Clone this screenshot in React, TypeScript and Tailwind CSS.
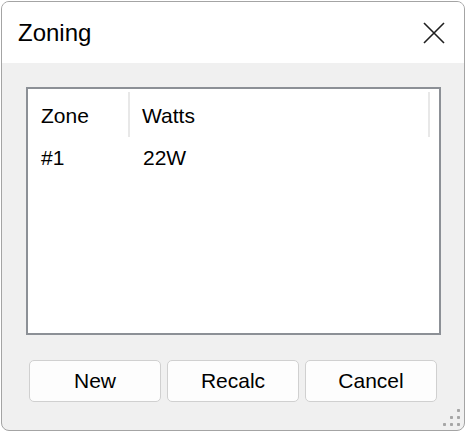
import React from "react";

export default function App() {
  const font = { fontFamily: '"Liberation Sans", Arial, sans-serif' };
  return (
    <div className="w-[467px] h-[432px] bg-white p-px" style={font}>
      <div className="w-[464px] h-[430px] rounded-[8px] border border-[#a4a4a4] overflow-hidden flex flex-col bg-[#f0f0f0] relative">
        <div className="h-[61px] bg-white flex items-center justify-between pl-[16px] pr-[19px] shrink-0">
          <span className="text-[24px] text-black leading-none mt-[1px]">Zoning</span>
          <svg width="22" height="22" viewBox="0 0 22 22" className="mt-[1px]">
            <path d="M1 1 L21 21 M21 1 L1 21" stroke="#1f1f1f" strokeWidth="1.6" fill="none" />
          </svg>
        </div>
        <div className="flex-1 flex flex-col pl-[24px] pr-[23px] pt-[24px]">
          <div className="h-[248px] border-2 border-[#8c9096] bg-white flex flex-col">
            <div className="flex h-[50px] text-[21px] text-black">
              <div className="w-[102px] pl-[13px] pt-[8px] border-r-2 border-[#e8e8e8] mt-[3px] mb-[2px]">
                Zone
              </div>
              <div className="w-[300px] pl-[12px] pt-[8px] border-r-2 border-[#e8e8e8] mt-[3px] mb-[2px]">
                Watts
              </div>
            </div>
            <div className="flex text-[21px] text-black mt-[3px]">
              <div className="w-[103px] pl-[13px]">#1</div>
              <div className="pl-[12px]">22W</div>
            </div>
          </div>
          <div className="flex gap-[6px] mt-[25px] pl-[3px]">
            {["New", "Recalc", "Cancel"].map((t) => (
              <div
                key={t}
                className="w-[132px] h-[42px] rounded-[5px] border border-[#d0d0d0] bg-[#fdfdfd] flex items-center justify-center text-[21px] text-black"
              >
                {t}
              </div>
            ))}
          </div>
        </div>
        <svg width="18" height="18" viewBox="0 0 18 18" className="absolute right-[3px] bottom-[4px]">
          {[
            [14, 2],
            [14, 9],
            [14, 16],
            [7, 9],
            [7, 16],
            [0, 16],
          ].map(([x, y], i) => (
            <rect key={i} x={x} y={y - 1} width="3" height="3" rx="0.8" fill="#a6a6a6" />
          ))}
        </svg>
      </div>
    </div>
  );
}
